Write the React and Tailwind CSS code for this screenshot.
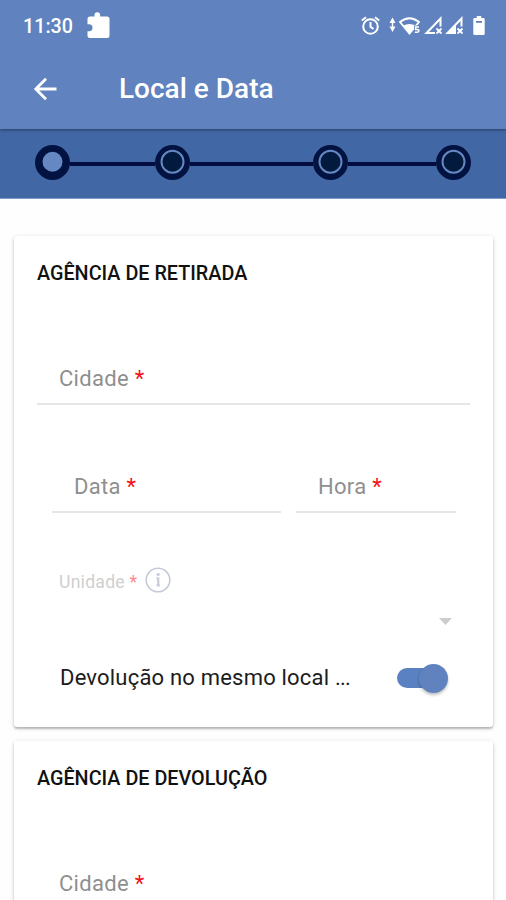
import { clsx } from 'clsx'

const STEPS = [
  { id: 'local', active: true },
  { id: 'grupo', line: 'w-[85px]' },
  { id: 'extras', line: 'w-[123px]' },
  { id: 'resumo', line: 'w-[88px]' },
]

export default function App() {
  return (
    <div className="h-[900px] w-[506px] overflow-hidden bg-[#fefefe] font-['Roboto',sans-serif]">
      <header className="relative z-10 h-[129px] bg-[#6083bf] text-white shadow-[0_1px_3px_rgba(0,0,0,0.4)]">
        <StatusBar />
        <div className="flex h-[74px] items-center pl-[33px]">
          <BackIcon />
          <h1 className="ml-[61px] text-[28px] leading-[32px] font-medium whitespace-nowrap">Local e Data</h1>
        </div>
      </header>

      <Stepper />

      <main className="flex flex-col gap-[14px] pt-[37px] pr-[13px] pl-[14px]">
        <Card title="AGÊNCIA DE RETIRADA">
          <Field label="Cidade" className="mt-[67px]" />

          <div className="mt-[56px] flex gap-[15px] pl-[15px]">
            <Field label="Data" className="w-[229px]" />
            <Field label="Hora" className="w-[160px]" />
          </div>

          {/* disabled until a city is picked */}
          <div className="mt-[53px] flex h-[28px] items-center pl-[22px]">
            <span className="pt-[3px] text-[17.6px] leading-[22px] tracking-[0.25px] text-[#cfcfcf]">
              Unidade <span className="text-[#ff8a8a]">*</span>
            </span>
            <InfoIcon />
          </div>
          <div className="mt-[24px] flex justify-end pr-[18px]">
            <svg width="13" height="7" viewBox="0 0 13 7" fill="#cdcdcd"><path d="M0 0h13L6.5 7z" /></svg>
          </div>

          <div className="mt-[38px] flex h-[30px] items-center justify-between pr-[22px] pl-[23px]">
            <span className="text-[22px] leading-[30px] tracking-[0.2px] whitespace-nowrap text-[#1c1c1c]">Devolução no mesmo local <span className="tracking-[-0.8px]">...</span></span>
            <Toggle />
          </div>
        </Card>

        <Card title="AGÊNCIA DE DEVOLUÇÃO">
          <Field label="Cidade" className="mt-[67px]" />
        </Card>
      </main>
    </div>
  )
}

function StatusBar() {
  return (
    <div className="flex h-[52px] items-center justify-between pr-[21px] pl-[23px]">
      <div className="flex items-center gap-[13px]">
        <span className="pt-[2px] text-[19.7px] leading-[24px] font-medium">11:30</span>
        <svg width="25" height="30" viewBox="0 0 25 30" fill="#fff">
          <path d="M4 5.500h4.500V4a2.800 2.800 0 0 1 5.600 0v1.500h6.900a2.500 2.500 0 0 1 2.500 2.500V24.500a2.500 2.500 0 0 1-2.500 2.500H4A2.500 2.500 0 0 1 1.500 24.500v-4.200h1.500a3.500 3.500 0 0 0 0-7H1.500V8A2.500 2.500 0 0 1 4 5.500z" />
        </svg>
      </div>
      <div className="flex items-center">
        {/* alarm */}
        <svg width="20" height="20" viewBox="0 0 20 20" fill="none" stroke="#fff" strokeWidth="2">
          <circle cx="9.500" cy="10.500" r="7.300" />
          <path d="M.8 4.500 5 1.200M18.200 4.500 14 1.200M9.500 6V10.800L12.500 13" />
        </svg>
        {/* data arrows + wifi */}
        <svg className="ml-[7px]" width="32" height="20" viewBox="0 0 32 20" fill="#fff">
          <path d="M1.500 7 4.500 1.500 7.500 7zM1.500 10.500h6L4.500 16zM3.800 6h1.400v5H3.800z" />
          <path d="M12 6Q21.500-1.500 31 6L21.500 17.500z" fill="none" stroke="#fff" strokeWidth="1.900" />
          <path d="M15 9.500Q21.500 6.500 28 9.500L21.500 18z" />
          <path d="M26 9.500h6V19h-6z" fill="#6083bf" />
          <path d="M31 11h-3.400v2.400h1.600q1.800 0 1.800 1.400t-1.800 1.400h-2.400" fill="none" stroke="#fff" strokeWidth="1.500" />
        </svg>
        <Signal className="ml-[4px]" />
        <Signal className="ml-[2px]" filled />
        <svg className="ml-[9px]" width="12" height="20" viewBox="0 0 12 20" fill="#fff">
          <path d="M3.800 0h4.400v2H10.500a1.200 1.200 0 0 1 1.200 1.200V17.800a1.200 1.200 0 0 1-1.200 1.200h-9A1.200 1.200 0 0 1 .3 17.800V3.200A1.200 1.200 0 0 1 1.500 2h2.300z" />
          <path d="M3 5h6v1.800H3z" fill="#6083bf" />
        </svg>
      </div>
    </div>
  )
}

function Signal({ filled = false, className }) {
  return (
    <svg className={className} width="19" height="20" viewBox="0 0 19 20" fill="none" stroke="#fff">
      <path d="M11 17H2.500L16.500 2.500V10.500" strokeWidth="2" />
      {filled && <path d="M1.500 18 11 8.500V18z" fill="#fff" stroke="none" />}
      <path d="m12.500 12.500 5 5M17.500 12.500l-5 5" strokeWidth="1.800" />
    </svg>
  )
}

function BackIcon() {
  return (
    <svg width="25" height="24" viewBox="0 0 25 24" fill="none" stroke="#fff" strokeWidth="2.800">
      <path d="M23.500 12H3.500M13 1.800 2.800 12 13 22.200" />
    </svg>
  )
}

function Stepper() {
  return (
    <div className="flex h-[70px] items-center border-b border-[#7f9bc9] bg-[#4267a5] pb-[2px] pl-[35px]">
      {STEPS.map(s => (
        <div key={s.id} className="flex items-center">
          {s.line && <div className={clsx('mt-[2px] h-[4px] bg-[#020c40]', s.line)} />}
          <svg width="35" height="35" viewBox="0 0 35 35">
            <circle cx="17.500" cy="17.500" r="17.500" fill="#021342" />
            {s.active
              ? <circle cx="17.500" cy="16.800" r="10" fill="#6587c2" />
              : <circle cx="17.500" cy="16.800" r="11" fill="#021a3d" stroke="#6587c2" strokeWidth="2" />}
          </svg>
        </div>
      ))}
    </div>
  )
}

function Card({ title, children }) {
  return (
    <section className="h-[491px] rounded-[3px] bg-white px-[23px] pt-[26px] shadow-[0_2px_2px_rgba(0,0,0,0.22),0_1px_5px_rgba(0,0,0,0.13)]">
      <h2 className="text-[19.8px] leading-[24px] font-medium whitespace-nowrap text-[#111]">{title}</h2>
      {children}
    </section>
  )
}

function Field({ label, className }) {
  return (
    <div className={clsx('h-[52px] border-b-2 border-[#e6e6e6] pt-[12px] pl-[22px]', className)}>
      <span className="text-[22px] leading-[28px] tracking-[0.3px] text-[#8f8f8f]">
        {label} <span className="text-[#f5101c]">*</span>
      </span>
    </div>
  )
}

function InfoIcon() {
  return (
    <svg className="ml-[8px]" width="26" height="26" viewBox="0 0 26 26" fill="none" stroke="#c5cad8" strokeWidth="1.600">
      <circle cx="13" cy="13" r="11.800" />
      <path d="M13.200 10.500v8.500M11.500 11.300h1.700M11.500 18.300h3.400" strokeWidth="2.400" strokeOpacity="0.9" />
      <circle cx="13.200" cy="7.500" r="1.600" fill="#c5cad8" stroke="none" />
    </svg>
  )
}

function Toggle() {
  return (
    <div className="flex h-[20px] w-[51px] items-center justify-end">
      <div className="h-[20px] w-[44px] shrink-0 rounded-full bg-[#5a81c1]" />
      <div className="-ml-[22px] size-[29px] shrink-0 rounded-full bg-[#6083bf] shadow-[0_2px_3px_rgba(0,0,0,0.25)]" />
    </div>
  )
}
